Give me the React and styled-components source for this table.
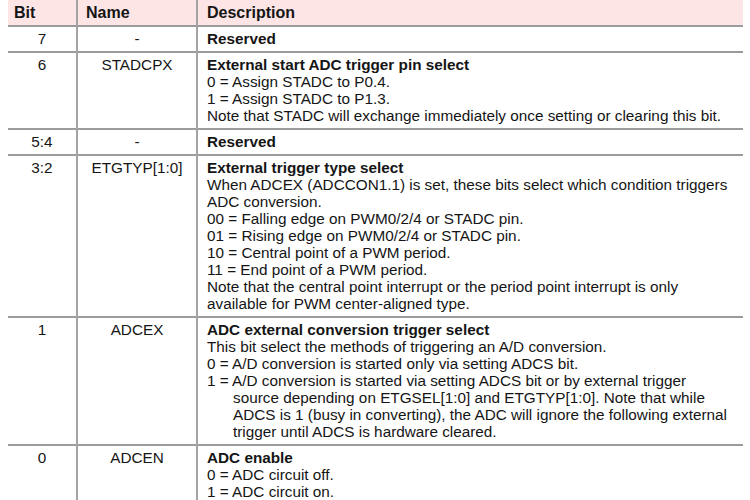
import styled, { createGlobalStyle } from "styled-components"

const Global = createGlobalStyle`
    body {
        margin: 0;
        background: #fff;
        font-family: "Liberation Sans", Arial, sans-serif;
        color: #151515;
    }
`

const Page = styled.div`
    padding-left: 8px;
`

const Table = styled.table`
    width: 735px;
    border-collapse: collapse;
    table-layout: fixed;
    font-size: 15.3px;
    line-height: 17px;
`

const HeadRow = styled.tr`
    background: #fde5e5;
    border-bottom: 2px solid #9b9b9b;
`

const HeadCell = styled.th`
    height: 24px;
    padding: 0 0 1px ${p => p.pad}px;
    text-align: left;
    font-size: 16px;
    font-weight: 700;
    border-left: ${p => (p.first ? "none" : "2px solid #a3a3a3")};
`

const Row = styled.tr`
    border-bottom: 2px solid #9b9b9b;
`

const Cell = styled.td`
    vertical-align: top;
    padding: 3px 0 4px ${p => p.pad || 0}px;
    text-align: ${p => p.align || "left"};
    border-left: ${p => (p.first ? "none" : "2px solid #a3a3a3")};
`

const Title = styled.div`
    font-weight: 700;
    white-space: nowrap;
`

const Line = styled.div`
    white-space: nowrap;
    padding-left: ${p => p.indent || 0}px;
`

const rows = [
    { bit: "7", name: "-", title: "Reserved", lines: [] },
    {
        bit: "6",
        name: "STADCPX",
        title: "External start ADC trigger pin select",
        lines: [
            "0 = Assign STADC to P0.4.",
            "1 = Assign STADC to P1.3.",
            "Note that STADC will exchange immediately once setting or clearing this bit.",
        ],
    },
    { bit: "5:4", name: "-", title: "Reserved", lines: [] },
    {
        bit: "3:2",
        name: "ETGTYP[1:0]",
        title: "External trigger type select",
        lines: [
            "When ADCEX (ADCCON1.1) is set, these bits select which condition triggers",
            "ADC conversion.",
            "00 = Falling edge on PWM0/2/4 or STADC pin.",
            "01 = Rising edge on PWM0/2/4 or STADC pin.",
            "10 = Central point of a PWM period.",
            "11 = End point of a PWM period.",
            "Note that the central point interrupt or the period point interrupt is only",
            "available for PWM center-aligned type.",
        ],
    },
    {
        bit: "1",
        name: "ADCEX",
        title: "ADC external conversion trigger select",
        lines: [
            "This bit select the methods of triggering an A/D conversion.",
            "0 = A/D conversion is started only via setting ADCS bit.",
            "1 = A/D conversion is started via setting ADCS bit or by external trigger",
            ["source depending on ETGSEL[1:0] and ETGTYP[1:0]. Note that while"],
            ["ADCS is 1 (busy in converting), the ADC will ignore the following external"],
            ["trigger until ADCS is hardware cleared."],
        ],
    },
    {
        bit: "0",
        name: "ADCEN",
        title: "ADC enable",
        lines: ["0 = ADC circuit off.", "1 = ADC circuit on."],
    },
]

const App = () => {
    return <Page>
        <Global />
        <Table>
            <colgroup>
                <col style={{ width: 69 }} />
                <col style={{ width: 120 }} />
                <col />
            </colgroup>
            <thead>
                <HeadRow>
                    <HeadCell first pad={6}>Bit</HeadCell>
                    <HeadCell pad={8}>Name</HeadCell>
                    <HeadCell pad={9}>Description</HeadCell>
                </HeadRow>
            </thead>
            <tbody>
                {rows.map(r => (
                    <Row key={r.bit}>
                        <Cell first align="center">{r.bit}</Cell>
                        <Cell align="center">{r.name}</Cell>
                        <Cell pad={9}>
                            <Title>{r.title}</Title>
                            {r.lines.map((l, i) =>
                                Array.isArray(l)
                                    ? <Line key={i} indent={26}>{l[0]}</Line>
                                    : <Line key={i}>{l}</Line>
                            )}
                        </Cell>
                    </Row>
                ))}
            </tbody>
        </Table>
    </Page>
}

export default App
